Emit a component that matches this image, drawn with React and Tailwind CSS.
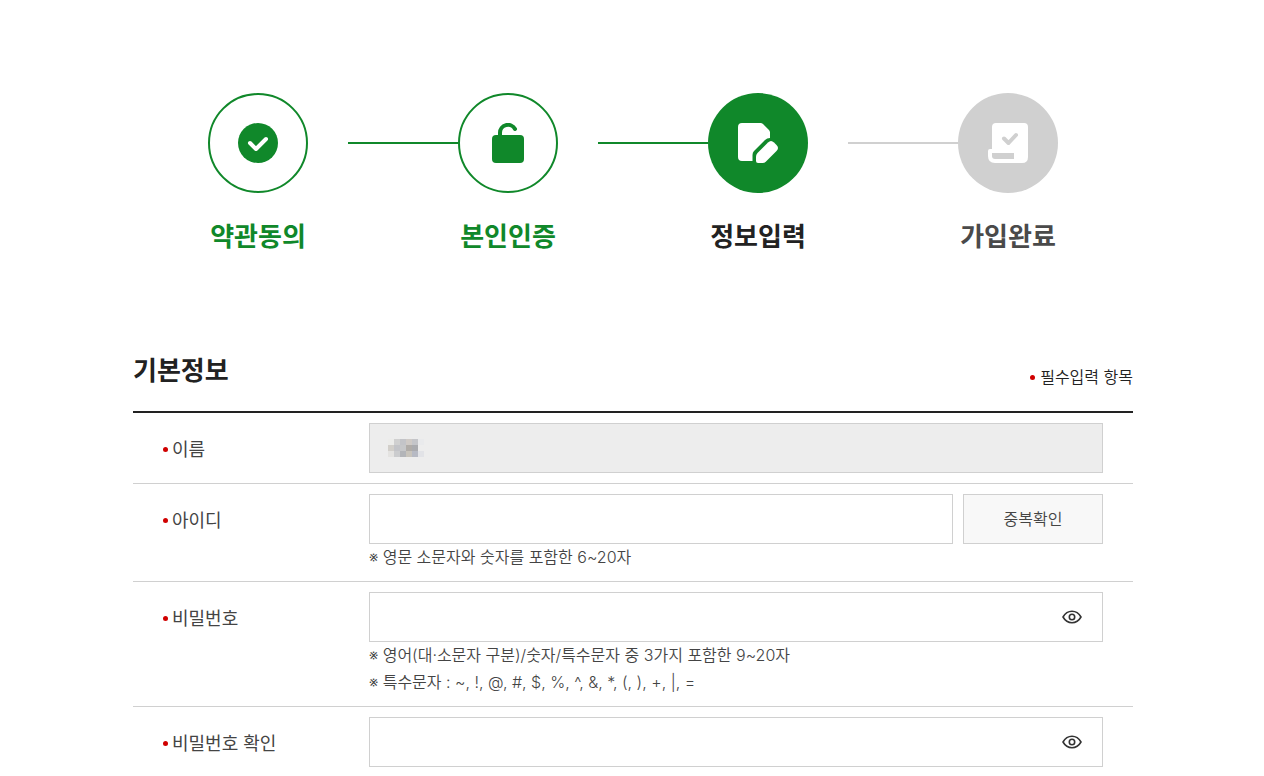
import React, { useState } from 'react';

const GREEN = '#10882a';

const CheckCircleIcon = () => (
    <svg width="40" height="40" viewBox="0 0 40 40" fill="none" aria-hidden="true">
        <circle cx="20" cy="20" r="20" fill={GREEN} />
        <path d="M12 20l6 6 10-10" stroke="#fff" strokeWidth="4" strokeLinecap="round" strokeLinejoin="round" />
    </svg>
);

const UnlockIcon = () => (
    <svg width="40" height="40" viewBox="0 0 40 40" fill="none" aria-hidden="true">
        <path d="M12 14V10a8 8 0 0 1 15-4" stroke={GREEN} strokeWidth="4" strokeLinecap="round" />
        <rect x="4" y="12" width="32" height="28" rx="4" fill={GREEN} />
    </svg>
);

const EditDocIcon = () => (
    <svg width="40" height="40" viewBox="0 0 40 40" fill="#fff" aria-hidden="true">
        <path d="M4 0h18.500q1.500 0 2.500 1l6 6q1 1 1 2.500V15q-3 0-5 2L16 28q-1.500 1.500-1.500 4v6H4q-4 0-4-4V4q0-4 4-4z" />
        <path d="M30 19.500q3-3 6 0l2.500 2.500q3 3 0 6L28 38.500Q26.500 40 24.500 40H20q-2 0-2-2v-4.500q0-2 1.500-3.500z" />
    </svg>
);

const DoneDocIcon = () => (
    <svg width="40" height="40" viewBox="0 0 40 40" fill="none" aria-hidden="true">
        <path d="M4 26V4q0-4 4-4h28q4 0 4 4v30q0 6-6 6H7q-7 0-7-7v-5q0-2 2-2z" fill="#fff" />
        <path d="M4 30h22v6H7q-3 0-3-3z" fill="#d0d0d0" />
        <path d="M16 15.500l4.500 4.500 7.500-8" stroke="#d0d0d0" strokeWidth="4" strokeLinecap="round" strokeLinejoin="round" />
    </svg>
);

const EyeIcon = () => (
    <svg width="20" height="14" viewBox="0 0 20 14" fill="none" stroke="#333" strokeWidth="1.600" aria-hidden="true">
        <path d="M1 7C3 3.500 6 1.300 10 1.300S17 3.500 19 7c-2 3.500-5 5.700-9 5.700S3 10.500 1 7z" strokeLinejoin="round" />
        <circle cx="10" cy="7" r="2.700" />
    </svg>
);

const steps = [
    { label: '약관동의', icon: CheckCircleIcon, circle: 'border-2 border-[#10882a] bg-white', line: '', text: 'text-[#10882a]' },
    { label: '본인인증', icon: UnlockIcon, circle: 'border-2 border-[#10882a] bg-white', line: 'bg-[#10882a]', text: 'text-[#10882a]' },
    { label: '정보입력', icon: EditDocIcon, circle: 'bg-[#10882a]', line: 'bg-[#10882a]', text: 'text-[#222]' },
    { label: '가입완료', icon: DoneDocIcon, circle: 'bg-[#d0d0d0]', line: 'bg-[#d0d0d0]', text: 'text-[#4a4a4a]' },
];

// masked name, 6px blocks
const mosaic = [
    ['#ececea', '#d0d0d0', '#c3c4c8', '#cfcac6', '#c4c5c9', '#e9eaec'],
    ['#d2cfca', '#c3c4c8', '#c6c7c9', '#b0aca8', '#aaabaf', '#ededed'],
    ['#e4e3e1', '#cbccce', '#b3b5b9', '#c8c4bc', '#b7bac4', '#e2e3e7'],
];

const Dot = () => <span className="size-[5px] shrink-0 rounded-full bg-[#d00000]" />;

const Row = ({ id, label, hints = [], children }) => (
    <div className="flex border-b border-[#d0d0d0] py-2.5 pr-[30px]">
        <label htmlFor={id} className="flex h-[50px] w-[236px] shrink-0 items-center gap-1 pt-[3px] pl-[30px] text-[18px] font-normal text-[#444]">
            <Dot />
            {label}
        </label>
        <div className="min-w-0 flex-1">
            {children}
            {hints.map(h => (
                <p key={h} className="h-[27px] text-[16px] leading-[27px] text-[#444]">{h}</p>
            ))}
        </div>
    </div>
);

const inputClass = 'h-[50px] w-full min-w-0 border border-[#d0d0d0] bg-white px-[18px] text-[16px] text-[#222] outline-none';

const PasswordInput = ({ id }) => {
    const [visible, setVisible] = useState(false);

    return (
        <div className="relative flex">
            <input id={id} type={visible ? 'text' : 'password'} className={inputClass} />
            <button
                type="button"
                aria-label="비밀번호 표시"
                onClick={() => setVisible(v => !v)}
                className="absolute inset-y-0 right-0 flex w-[63px] cursor-pointer items-center justify-center"
            >
                <EyeIcon />
            </button>
        </div>
    );
};

const App = () => (
    <main className="bg-white pt-[93px] pl-0.5 font-['Inter','Noto_Sans_CJK_KR',sans-serif] font-[350]">
        <ol className="mx-auto flex max-w-[850px]">
            {steps.map(({ label, icon: Icon, circle, line, text }, i) => (
                <li key={label} className={i === 0 ? 'flex' : 'flex flex-1'}>
                    {i > 0 && <span className={`mt-[49px] ml-10 h-0.5 flex-1 ${line}`} />}
                    <div className="flex w-[100px] flex-col items-center gap-[26px]">
                        <span className={`flex size-[100px] items-center justify-center rounded-full ${circle}`}>
                            <Icon />
                        </span>
                        <strong className={`text-[26px] leading-[36px] font-bold whitespace-nowrap ${text}`}>{label}</strong>
                    </div>
                </li>
            ))}
        </ol>

        <form className="mx-auto mt-[98px] max-w-[1000px]" onSubmit={e => e.preventDefault()}>
            <div className="flex items-end justify-between border-b-2 border-[#222] pb-[22px]">
                <h2 className="text-[26px] leading-[36px] font-bold text-[#222]">기본정보</h2>
                <p className="flex items-center gap-[5px] text-[16px] leading-[24px] text-[#222]">
                    <Dot />
                    필수입력 항목
                </p>
            </div>

            <Row id="name" label="이름">
                <div className="relative flex">
                    <input id="name" type="text" readOnly className="h-[50px] w-full border border-[#d0d0d0] bg-[#ededed] px-[18px] outline-none" />
                    <svg className="absolute top-4 left-[19px]" width="36" height="18" shapeRendering="crispEdges" aria-hidden="true">
                        {mosaic.map((cells, y) => cells.map((c, x) => (
                            <rect key={`${x}-${y}`} x={x * 6} y={y * 6} width="6" height="6" fill={c} />
                        )))}
                    </svg>
                </div>
            </Row>

            <Row id="user-id" label="아이디" hints={['※ 영문 소문자와 숫자를 포함한 6~20자']}>
                <div className="flex gap-2.5">
                    <input id="user-id" type="text" className={inputClass} />
                    <button type="button" className="h-[50px] w-[140px] shrink-0 cursor-pointer border border-[#d0d0d0] bg-[#f8f8f8] text-[16px] text-[#444]">
                        중복확인
                    </button>
                </div>
            </Row>

            <Row
                id="password"
                label="비밀번호"
                hints={[
                    '※ 영어(대·소문자 구분)/숫자/특수문자 중 3가지 포함한 9~20자',
                    '※ 특수문자 : ~, !, @, #, $, %, ^, &, *, (, ), +, |, =',
                ]}
            >
                <PasswordInput id="password" />
            </Row>

            <Row id="password-check" label="비밀번호 확인">
                <PasswordInput id="password-check" />
            </Row>
        </form>
    </main>
);

export default App;
